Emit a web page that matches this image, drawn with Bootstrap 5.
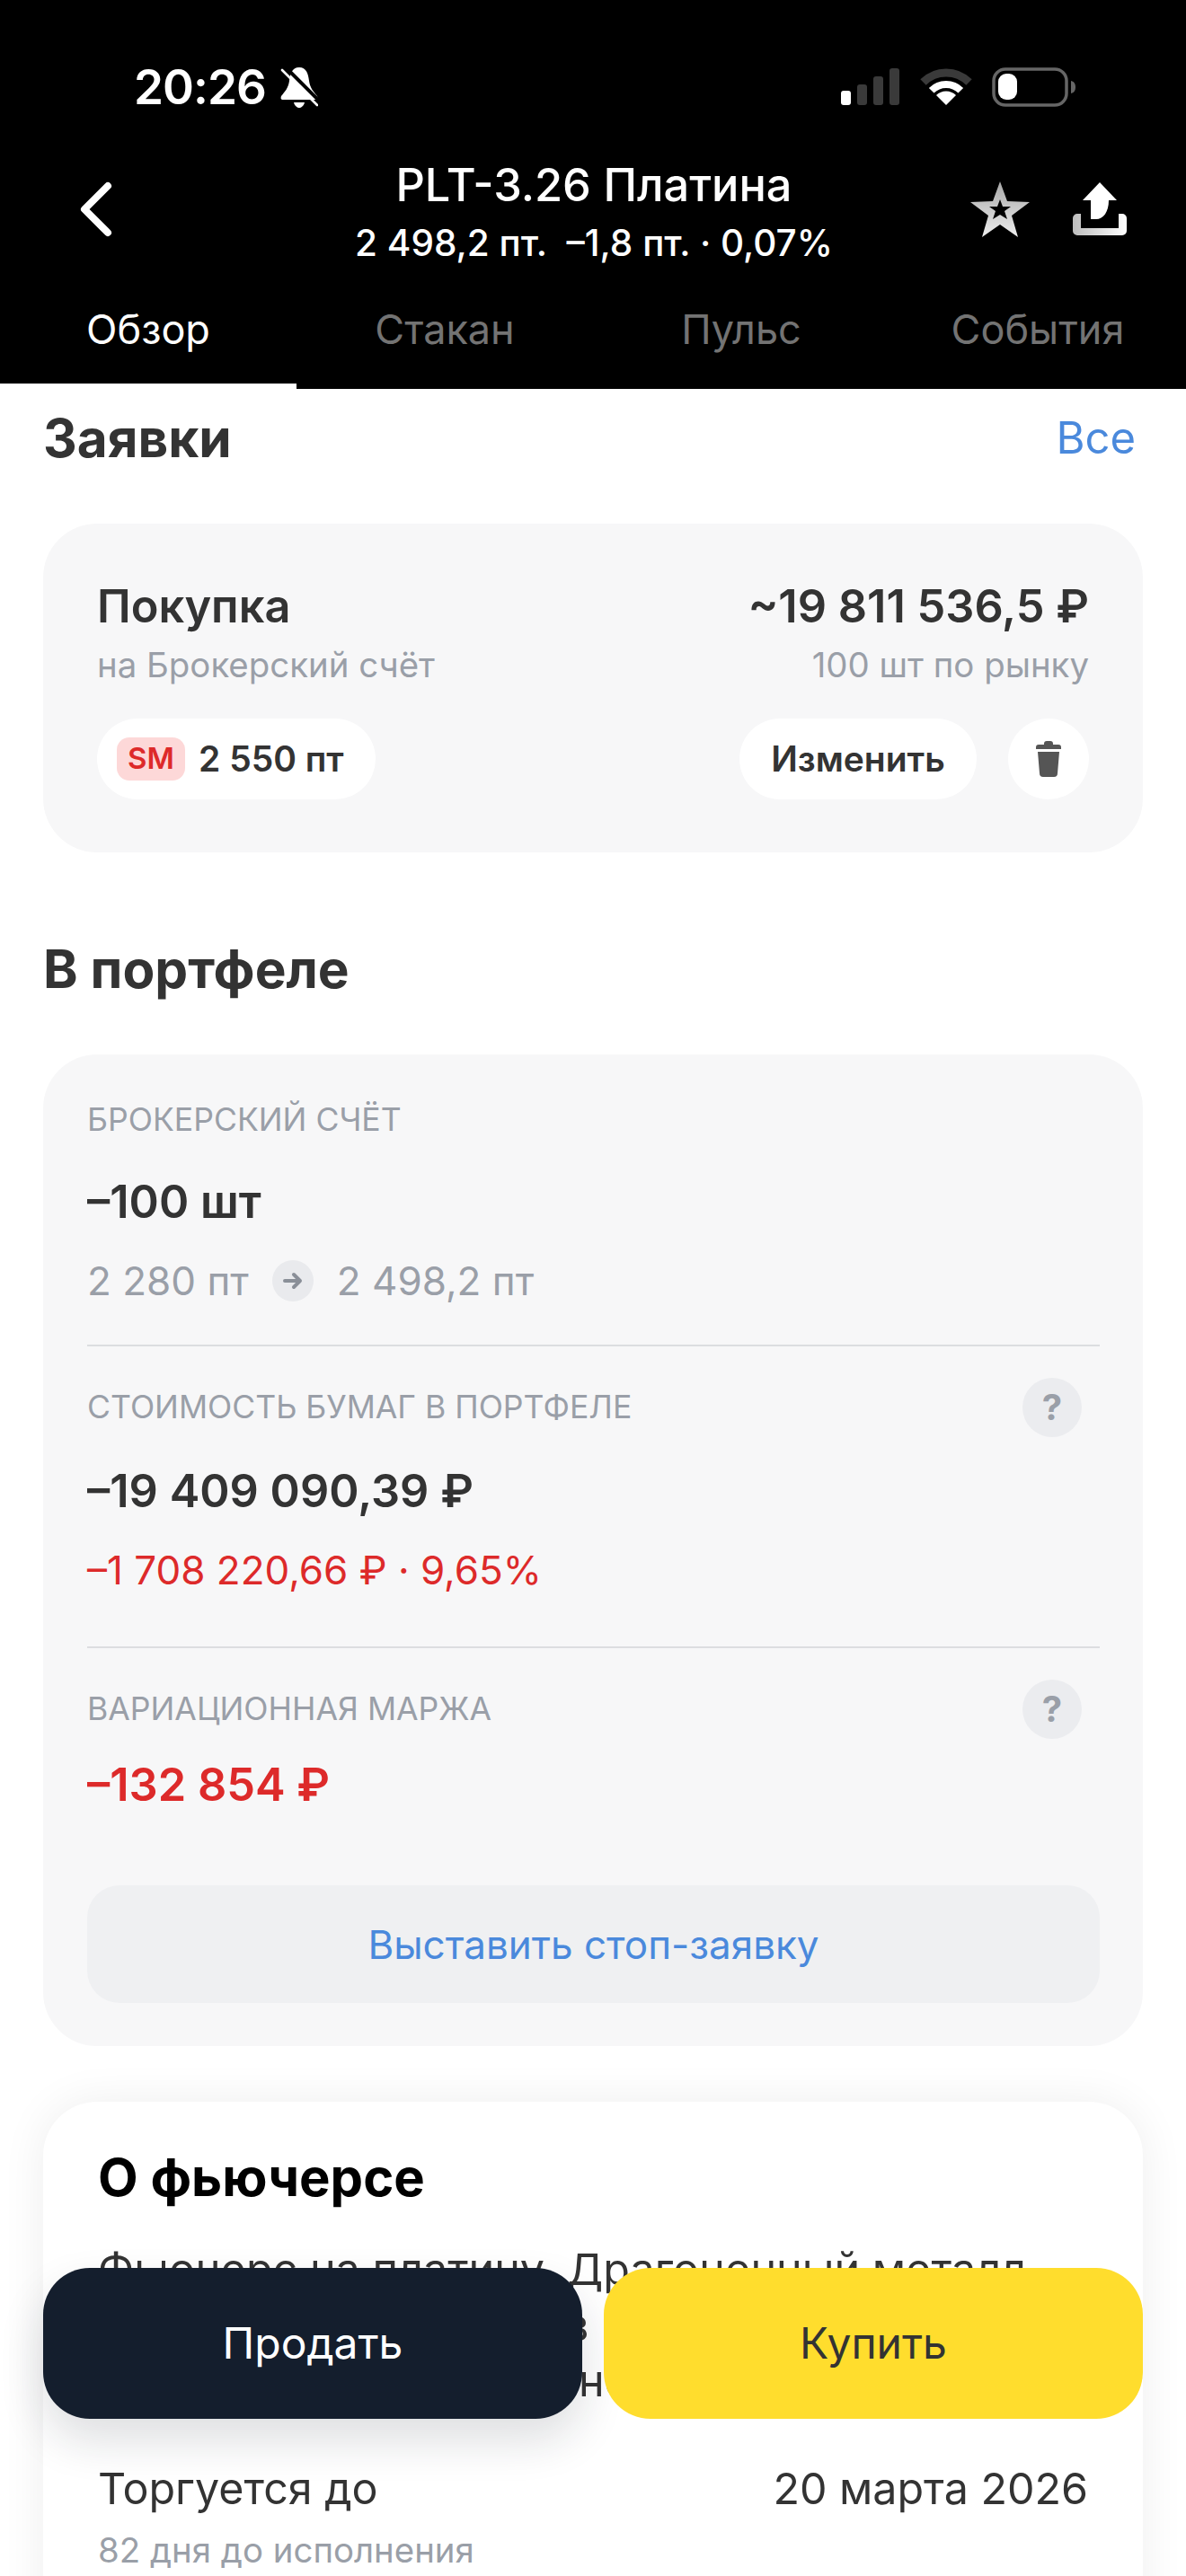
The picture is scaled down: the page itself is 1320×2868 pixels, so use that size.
<!DOCTYPE html>
<html lang="ru">
<head>
    <meta charset="UTF-8">
    <meta name="viewport" content="width=device-width, initial-scale=1.0">
    <title>PLT-3.26 Платина</title>
    <link href="https://cdn.jsdelivr.net/npm/bootstrap@5.3.0/dist/css/bootstrap.min.css" rel="stylesheet">
    <style>
        html, body { height: 2868px; overflow: hidden; }
        body { font-family: Inter, "Noto Sans", sans-serif; background: #fff; color: #333; position: relative; }
        .top-head { background: #000; color: #fff; height: 433px; }
        .status-row { height: 176px; padding: 18px 122px 0 149px; }
        .clock { font-size: 53px; font-weight: 600; line-height: 1; letter-spacing: -1px; }
        .status-gap { margin-left: 22px; }
        .title-row { height: 114px; padding: 0 66px 0 88px; }
        .back-box { width: 154px; }
        .title-main { font-size: 50.5px; font-weight: 500; line-height: 60px; }
        .title-sub { font-size: 40.5px; font-weight: 500; line-height: 38px; margin-top: 16px; }
        .tab-row .nav-link { padding: 47px 0 30px; color: #737373; font-size: 45px; line-height: 60px; border-bottom: 6px solid #000; border-radius: 0; }
        .tab-row .nav-link.active { color: #fff; border-bottom-color: #fff; }
        .page-wrap { padding: 0 48px; }
        .sec-head { font-size: 58.5px; font-weight: 700; line-height: 70px; color: #333; }
        .see-all { font-size: 49px; line-height: 70px; color: #4a89dc; text-decoration: none; }
        .gray-card { background: #f7f7f8; border-radius: 60px; }
        .order-card { height: 366px; padding: 62px 60px 0; }
        .big-txt { font-size: 50.5px; font-weight: 600; line-height: 60px; }
        .sub-txt { font-size: 38.4px; line-height: 50px; color: #9a9fa8; }
        .pill { background: #fff; border-radius: 45px; height: 90px; font-size: 39px; font-weight: 600; color: #333; }
        .sm-tag { background: #fdd8d8; color: #dd2a2a; border-radius: 14px; font-size: 33px; width: 76px; height: 48px; font-weight: 600; }
        .hold-card { height: 1104px; padding: 53px 48px 0 49px; }
        .cap-txt { font-size: 35.6px; line-height: 40px; color: #9a9fa8; }
        .cap-row { height: 66px; padding-right: 20px; }
        .hint { width: 66px; height: 66px; background: #ebecef; color: #9a9fa8; font-size: 40px; font-weight: 700; }
        .mid-txt { font-size: 44px; line-height: 60px; color: #9a9fa8; }
        .go-dot { width: 46px; height: 46px; background: #e9eaed; }
        .red-txt { color: #dd2a2a; }
        .rule-line { height: 2px; background: #dcdde0; }
        .stop-btn { height: 131px; background: #eff0f2; border: 0; border-radius: 36px; color: #4a89dc; font-size: 44px; }
        .about-card { background: #fff; border-radius: 60px; box-shadow: 0 0 50px rgba(0, 0, 0, .07); padding: 49px 61px 0; height: 620px; }
        .about-title { font-size: 58px; font-weight: 700; line-height: 70px; color: #000; }
        .about-text { font-size: 48.5px; line-height: 62px; color: #333; white-space: nowrap; }
        .wide-words { word-spacing: 1.3px; }
        .tight-words { word-spacing: -7px; }
        .plain-txt { font-size: 48.4px; line-height: 60px; }
        .trade-bar { position: absolute; left: 48px; right: 48px; top: 2525px; gap: 24px; }
        .trade-btn { height: 168px; width: 600px; border: 0; border-radius: 52px; font-size: 48px; }
        .sell-btn { background: #141e2d; color: #fff; box-shadow: 0 24px 50px rgba(20, 30, 45, .14); }
        .buy-btn { background: #ffdd2d; color: #333; }
    </style>
</head>
<body>
    <div class="top-head">
        <div class="status-row d-flex justify-content-between align-items-center">
            <div class="d-flex align-items-center gap-3">
                <span class="clock">20:26</span>
                <svg width="42" height="47" viewBox="0 0 42 47">
                    <path fill="#fff" d="M21 1C13 1 11 8 10 16 9 24 5 28 1 33 0 36 1 37 3 37H39C41 37 42 36 41 33 37 28 33 24 32 16 31 8 29 1 21 1Z"/>
                    <path fill="#fff" d="M15 40H27C26 44 23 46 21 46 19 46 16 44 15 40Z"/>
                    <path stroke="#000" stroke-width="4" d="M5 0 46 41"/>
                    <path stroke="#fff" stroke-width="2.6" stroke-linecap="round" d="M2 4 41 43"/>
                </svg>
            </div>
            <div class="d-flex align-items-center">
                <svg width="66" height="42" viewBox="0 0 66 42">
                    <rect x="0" y="25" width="11" height="16" rx="3" fill="#fff"/>
                    <rect x="18" y="18" width="11" height="23" rx="3" fill="#3a3a3a"/>
                    <rect x="36" y="9" width="11" height="32" rx="3" fill="#3a3a3a"/>
                    <rect x="54" y="0" width="11" height="41" rx="3" fill="#3a3a3a"/>
                </svg>
                <svg class="status-gap" width="58" height="42" viewBox="0 0 58 42">
                    <path fill="none" stroke="#3a3a3a" stroke-width="9" d="M3.5 15.5A36 36 0 0 1 54.5 15.5"/>
                    <path fill="none" stroke="#fff" stroke-width="8" d="M12.7 24.7A23 23 0 0 1 45.3 24.7"/>
                    <path fill="#fff" d="M29 41 18 30A15.5 15.5 0 0 1 40 30Z"/>
                </svg>
                <svg class="status-gap" width="94" height="44" viewBox="0 0 94 44">
                    <rect x="2" y="2" width="81" height="40" rx="13" fill="none" stroke="#666" stroke-width="3.5"/>
                    <rect x="7" y="7" width="21" height="29" rx="9" fill="#fff"/>
                    <path fill="#666" d="M88 15C92 16 93 19 93 22 93 25 92 28 88 29Z"/>
                </svg>
            </div>
        </div>
        <div class="title-row d-flex align-items-center justify-content-between">
            <div class="back-box">
                <svg class="d-block" width="38" height="62" viewBox="0 0 38 62"><path fill="none" stroke="#fff" stroke-width="8" stroke-linecap="round" stroke-linejoin="round" d="M32 5 6 31 32 57"/></svg>
            </div>
            <div class="text-center flex-grow-1">
                <div class="title-main">PLT-3.26 Платина</div>
                <div class="title-sub">2 498,2 пт.&nbsp;&nbsp;–1,8 пт. · 0,07%</div>
            </div>
            <div class="d-flex align-items-center">
                <svg width="66" height="62" viewBox="0 0 66 62">
                    <defs><linearGradient id="starFill" x1="0" y1="0" x2="0" y2="1"><stop offset="0" stop-color="#a8a8a8"/><stop offset="1" stop-color="#eee"/></linearGradient></defs>
                    <path fill="url(#starFill)" fill-rule="evenodd" d="M33 0 41 22 66 23 46 38 53 62 33 48 13 62 20 38 0 23 25 22ZM33 20 30 28 21 28 28 33 25 42 33 37 41 42 38 33 45 28 36 28Z"/>
                </svg>
                <svg class="ms-5" width="60" height="60" viewBox="0 0 60 60">
                    <defs><linearGradient id="shareFill" x1="0" y1="0" x2="1" y2="0"><stop offset="0" stop-color="#bdbdbd"/><stop offset="1" stop-color="#fff"/></linearGradient></defs>
                    <path fill="#fff" d="M30 0 49 20H40C40 33 34 41 26 41H20V20H11Z"/>
                    <path fill="url(#shareFill)" d="M0 40A5 5 0 0 1 5 35H9V51H51V35H55A5 5 0 0 1 60 40V54A5 5 0 0 1 55 59H5A5 5 0 0 1 0 54Z"/>
                </svg>
            </div>
        </div>
        <ul class="nav nav-justified tab-row">
            <li class="nav-item"><a class="nav-link active" href="#">Обзор</a></li>
            <li class="nav-item"><a class="nav-link" href="#">Стакан</a></li>
            <li class="nav-item"><a class="nav-link" href="#">Пульс</a></li>
            <li class="nav-item"><a class="nav-link" href="#">События</a></li>
        </ul>
    </div>

    <div class="page-wrap">
        <div class="d-flex justify-content-between" style="margin-top:20px;margin-bottom:60px">
            <div class="sec-head">Заявки</div>
            <a class="see-all me-2" href="#">Все</a>
        </div>

        <div class="gray-card order-card">
            <div class="d-flex justify-content-between big-txt">
                <span>Покупка</span>
                <span>~19 811 536,5 ₽</span>
            </div>
            <div class="d-flex justify-content-between sub-txt" style="margin-top:10px">
                <span>на Брокерский счёт</span>
                <span>100 шт по рынку</span>
            </div>
            <div class="d-flex justify-content-between" style="margin-top:35px">
                <div class="pill d-flex align-items-center" style="padding:0 35px 0 22px;gap:15px">
                    <span class="sm-tag d-flex align-items-center justify-content-center">SM</span>
                    <span>2 550 пт</span>
                </div>
                <div class="d-flex" style="gap:35px">
                    <div class="pill d-flex align-items-center justify-content-center" style="width:264px">Изменить</div>
                    <div class="pill d-flex align-items-center justify-content-center" style="width:90px">
                        <svg width="28" height="40" viewBox="0 0 28 40"><path fill="#555" d="M9 3A3 3 0 0 1 12 0H16A3 3 0 0 1 19 3V4H25A3 3 0 0 1 28 7V9H0V7A3 3 0 0 1 3 4H9ZM2 12H26L24 36A4 4 0 0 1 20 40H8A4 4 0 0 1 4 36Z"/></svg>
                    </div>
                </div>
            </div>
        </div>

        <div class="sec-head" style="margin-top:95px;margin-bottom:60px">В портфеле</div>

        <div class="gray-card hold-card">
            <div class="cap-txt">БРОКЕРСКИЙ СЧЁТ</div>
            <div class="big-txt" style="margin-top:41px">–100 шт</div>
            <div class="mid-txt d-flex align-items-center" style="margin-top:28px;gap:26px">
                <span>2 280 пт</span>
                <span class="go-dot rounded-circle d-flex align-items-center justify-content-center">
                    <svg width="24" height="20" viewBox="0 0 24 20"><path fill="none" stroke="#8a8f98" stroke-width="4" stroke-linecap="round" stroke-linejoin="round" d="M3 10H20M13 3 20 10 13 17"/></svg>
                </span>
                <span>2 498,2 пт</span>
            </div>
            <div class="rule-line" style="margin-top:41px"></div>
            <div class="cap-row d-flex justify-content-between align-items-center" style="margin-top:35px">
                <span class="cap-txt">СТОИМОСТЬ БУМАГ В ПОРТФЕЛЕ</span>
                <span class="hint rounded-circle d-flex align-items-center justify-content-center">?</span>
            </div>
            <div class="big-txt" style="margin-top:30px">–19 409 090,39 ₽</div>
            <div class="mid-txt red-txt" style="margin-top:28px">–1 708 220,66 ₽ · 9,65%</div>
            <div class="rule-line" style="margin-top:55px"></div>
            <div class="cap-row d-flex justify-content-between align-items-center" style="margin-top:35px">
                <span class="cap-txt">ВАРИАЦИОННАЯ МАРЖА</span>
                <span class="hint rounded-circle d-flex align-items-center justify-content-center">?</span>
            </div>
            <div class="big-txt red-txt" style="margin-top:21px">–132 854 ₽</div>
            <button class="btn stop-btn w-100" style="margin-top:82px">Выставить стоп-заявку</button>
        </div>

        <div class="about-card" style="margin-top:62px">
            <div class="about-title">О фьючерсе</div>
            <div class="about-text" style="margin-top:37px">
                Фьючерс на платину. Драгоценный металл<br>
                <span class="wide-words">используют в химии, в</span><br>
                <span class="tight-words">автомобилях и медицине</span>
            </div>
            <div class="d-flex justify-content-between plain-txt" style="margin-top:59px">
                <span>Торгуется до</span>
                <span>20 марта 2026</span>
            </div>
            <div class="sub-txt" style="margin-top:13px">82 дня до исполнения</div>
        </div>
    </div>

    <div class="trade-bar d-flex">
        <button class="btn trade-btn sell-btn">Продать</button>
        <button class="btn trade-btn buy-btn">Купить</button>
    </div>

    <script src="https://cdn.jsdelivr.net/npm/bootstrap@5.3.0/dist/js/bootstrap.bundle.min.js"></script>
</body>
</html>
